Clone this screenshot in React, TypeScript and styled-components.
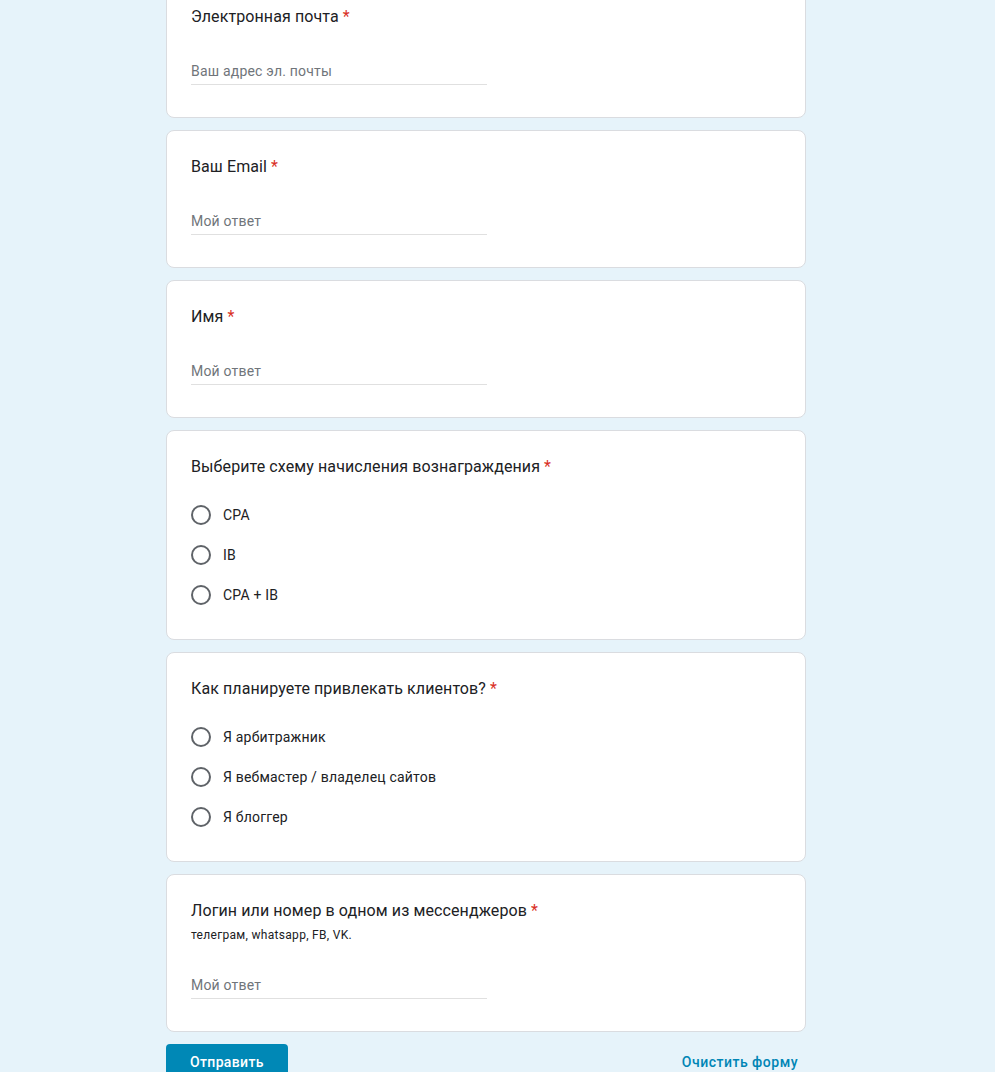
import React from 'react'
import styled, { createGlobalStyle } from 'styled-components'

const GlobalStyle = createGlobalStyle`
  html, body {
    margin: 0;
    padding: 0;
    background: #e6f3fa;
  }
  body {
    font-family: Roboto, "Liberation Sans", Arial, sans-serif;
    color: #202124;
  }
`

const Page = styled.div`
  width: 640px;
  margin: -20px 0 0 166px;
  display: flex;
  flex-direction: column;
  gap: 12px;
`

const Card = styled.div`
  background: #fff;
  border: 1px solid #dadce0;
  border-radius: 8px;
  padding: 24px;
`

const Title = styled.div`
  font-family: Roboto, "Liberation Sans", Arial, sans-serif;
  font-size: 16px;
  line-height: 24px;
  letter-spacing: 0.1px;
  color: #202124;
`

const Star = styled.span`
  color: #d93025;
  margin-left: 4px;
`

const Hint = styled.div`
  margin-top: 4px;
  font-size: 12px;
  line-height: 16px;
  letter-spacing: 0.3px;
  color: #202124;
`

const Input = styled.input`
  display: block;
  box-sizing: border-box;
  width: 296px;
  height: 33px;
  margin: 23px 0 8px;
  padding: 5px 0 0;
  border: none;
  border-bottom: 1px solid #e0e0e0;
  outline: none;
  background: transparent;
  font-family: Roboto, "Liberation Sans", Arial, sans-serif;
  font-size: 14px;
  letter-spacing: 0.2px;
  color: #202124;
  &::placeholder {
    color: #70757a;
  }
`

const Options = styled.div`
  margin-top: 16px;
  display: flex;
  flex-direction: column;
`

const Option = styled.label`
  height: 40px;
  display: flex;
  align-items: center;
  gap: 12px;
  font-size: 14px;
  letter-spacing: 0.2px;
  color: #202124;
  cursor: pointer;
`

const Radio = styled.span`
  box-sizing: border-box;
  width: 20px;
  height: 20px;
  border: 2px solid #5f6368;
  border-radius: 50%;
`

const Footer = styled.div`
  display: flex;
  justify-content: space-between;
  align-items: center;
  padding-bottom: 24px;
`

const Submit = styled.button`
  height: 36px;
  padding: 0 24px;
  border: none;
  border-radius: 4px;
  background: #0088b6;
  color: #fff;
  font-family: Roboto, "Liberation Sans", Arial, sans-serif;
  font-size: 14px;
  font-weight: 500;
  letter-spacing: 0.35px;
`

const Clear = styled.button`
  height: 36px;
  padding: 0 8px;
  border: none;
  background: transparent;
  color: #0085b5;
  font-family: Roboto, "Liberation Sans", Arial, sans-serif;
  font-size: 14px;
  font-weight: 500;
  letter-spacing: 0.5px;
`

function TextQuestion({ title, hint, placeholder }: { title: string; hint?: string; placeholder: string }) {
  return (
    <Card>
      <Title>
        {title}
        <Star>*</Star>
      </Title>
      {hint && <Hint>{hint}</Hint>}
      <Input placeholder={placeholder} />
    </Card>
  )
}

function RadioQuestion({ title, options }: { title: string; options: string[] }) {
  return (
    <Card>
      <Title>
        {title}
        <Star>*</Star>
      </Title>
      <Options>
        {options.map((o) => (
          <Option key={o}>
            <Radio />
            {o}
          </Option>
        ))}
      </Options>
    </Card>
  )
}

export default function App() {
  return (
    <>
      <GlobalStyle />
      <Page>
        <TextQuestion title="Электронная почта" placeholder="Ваш адрес эл. почты" />
        <TextQuestion title="Ваш Email" placeholder="Мой ответ" />
        <TextQuestion title="Имя" placeholder="Мой ответ" />
        <RadioQuestion title="Выберите схему начисления вознаграждения" options={['CPA', 'IB', 'CPA + IB']} />
        <RadioQuestion
          title="Как планируете привлекать клиентов?"
          options={['Я арбитражник', 'Я вебмастер / владелец сайтов', 'Я блоггер']}
        />
        <TextQuestion
          title="Логин или номер в одном из мессенджеров"
          hint="телеграм, whatsapp, FB, VK."
          placeholder="Мой ответ"
        />
        <Footer>
          <Submit>Отправить</Submit>
          <Clear>Очистить форму</Clear>
        </Footer>
      </Page>
    </>
  )
}
